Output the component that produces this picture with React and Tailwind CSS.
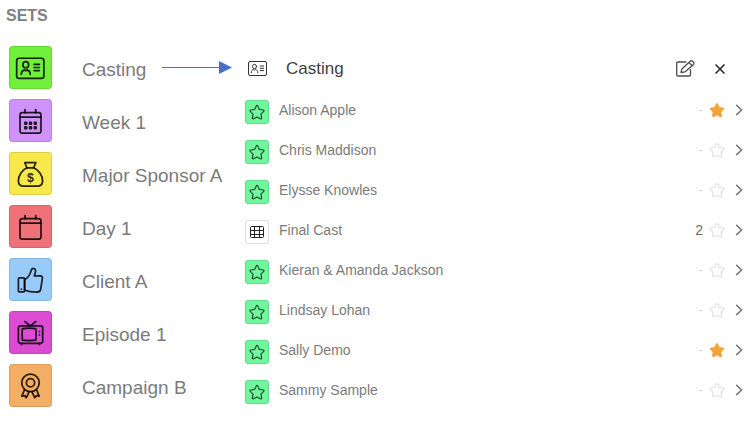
import React from "react";

const STAR =
  "M12 2.2c.5 0 .9.3 1.1.7l2.5 5.3 5.8.8c1 .2 1.4 1.3.7 2l-4.2 4.100 1 5.800c.2 1-.9 1.800-1.800 1.300L12 19.500l-5.100 2.700c-.9.5-2-.3-1.800-1.300l1-5.800L1.900 11c-.7-.7-.3-1.800.7-2l5.800-.8 2.500-5.300c.2-.4.6-.7 1.100-.7z";

function StarIcon({ className, filled, weight }) {
  return (
    <svg
      viewBox="0 0 24 24"
      className={className}
      fill={filled ? "currentColor" : "none"}
      stroke="currentColor"
      strokeWidth={weight}
      strokeLinejoin="round"
      aria-hidden="true"
    >
      <path d={STAR} />
    </svg>
  );
}

function TileSvg({ children }) {
  return (
    <svg
      viewBox="0 0 43 43"
      className="size-full"
      fill="none"
      stroke="currentColor"
      strokeWidth="1.8"
      strokeLinecap="round"
      strokeLinejoin="round"
      aria-hidden="true"
    >
      {children}
    </svg>
  );
}

const cardIcon = (
  <TileSvg>
    <rect x="7" y="11.800" width="28.500" height="21" rx="2.500" />
    <ellipse cx="16.500" cy="18.700" rx="3" ry="3.300" />
    <path d="M11.800 28.700c0-3 1.500-4.200 3.300-4.700l1.400.8 1.400-.8c1.800.5 3.300 1.700 3.300 4.700" />
    <path d="M25.300 18.300h5.500M25.300 21.500h5.500M25.300 24.700h5.500" />
  </TileSvg>
);

const calendarBody = (
  <>
    <rect x="10.500" y="13.300" width="22" height="21.500" rx="2.500" />
    <path d="M10.500 18h22M15.800 10v3.300M27 10v3.300" />
  </>
);

const weekIcon = (
  <TileSvg>
    {calendarBody}
    <g fill="currentColor" stroke="none">
      <rect x="14.700" y="22.500" width="3.600" height="3.600" rx="1" />
      <rect x="19.700" y="22.500" width="3.600" height="3.600" rx="1" />
      <rect x="24.700" y="22.500" width="3.600" height="3.600" rx="1" />
      <rect x="14.700" y="27.300" width="3.600" height="3.600" rx="1" />
      <rect x="19.700" y="27.300" width="3.600" height="3.600" rx="1" />
      <rect x="24.700" y="27.300" width="3.600" height="3.600" rx="1" />
    </g>
  </TileSvg>
);

const dayIcon = <TileSvg>{calendarBody}</TileSvg>;

const moneyIcon = (
  <TileSvg>
    <path d="M15.500 10.200h11.600l-2.300 5.300h-7z" />
    <path d="M17.800 15.500C13 17.500 8.800 23.500 8.800 29c0 4 2 5.700 5.700 5.700h13.800c3.700 0 5.900-1.700 5.900-5.700 0-5.500-4.400-11.500-9.400-13.500" />
    <text
      x="21.400"
      y="30"
      textAnchor="middle"
      fill="currentColor"
      stroke="none"
      className="font-['Liberation_Sans',Arial,sans-serif] text-[13px] font-bold"
    >
      $
    </text>
  </TileSvg>
);

const thumbIcon = (
  <TileSvg>
    <rect x="8.800" y="19.800" width="6.500" height="14.700" rx="1" />
    <path d="M12 31.500v.2" />
    <path d="M15.300 21.500c3.500-1.200 4.700-3.500 6.200-7.300.8-2 .7-4.400 2.900-4.400 2 0 2.600 1.800 2.300 3.700-.2 1.500-1 3-1.200 4.300h6.500c1.300 0 2.200.9 2 2.300l-1.800 11.600c-.4 2.200-1.900 3-4 3-4.600 0-8.800-.4-12.900-1.900z" />
  </TileSvg>
);

const tvIcon = (
  <TileSvg>
    <rect x="8.800" y="14.500" width="25.500" height="18.300" rx="2" />
    <path d="M13 17.500c4.200-.6 9.800-.6 14 0 .5 4 .5 8 0 12-4.200.6-9.800.6-14 0-.5-4-.5-8 0-12z" />
    <path d="M15.500 10l5.800 4.500 5.800-4.500M12 33v1.200M31 33v1.200" />
    <path d="M30.900 20.500v.2M30.900 24v.2" />
  </TileSvg>
);

const awardIcon = (
  <TileSvg>
    <circle cx="21.500" cy="18.700" r="9.200" />
    <circle cx="21.500" cy="18.700" r="4.300" />
    <path d="M15.200 26l-2.800 6.700 3-.6 1.700 2.200 3-6.300M27.800 26l2.800 6.700-3-.6-1.700 2.200-3-6.300" />
  </TileSvg>
);

const SETS = [
  { name: "Casting", tile: "bg-[#70f03a]", icon: cardIcon, current: true },
  { name: "Week 1", tile: "bg-[#cf91fa]", icon: weekIcon },
  { name: "Major Sponsor A", tile: "bg-[#f7e84b]", icon: moneyIcon },
  { name: "Day 1", tile: "bg-[#ef7179]", icon: dayIcon },
  { name: "Client A", tile: "bg-[#98cbfa]", icon: thumbIcon },
  { name: "Episode 1", tile: "bg-[#da4cd2]", icon: tvIcon },
  { name: "Campaign B", tile: "bg-[#f4ad64]", icon: awardIcon },
];

const MEMBERS = [
  { name: "Alison Apple", starred: true },
  { name: "Chris Maddison" },
  { name: "Elysse Knowles" },
  { name: "Final Cast", count: 2, grid: true },
  { name: "Kieran & Amanda Jackson" },
  { name: "Lindsay Lohan" },
  { name: "Sally Demo", starred: true },
  { name: "Sammy Sample" },
];

function Arrow() {
  return (
    <svg viewBox="0 0 70 15" className="ml-4 h-[15px] w-[70px] shrink-0 text-[#4472c4]" aria-hidden="true">
      <path d="M0 7.500h58" stroke="currentColor" />
      <path d="M57 1L70 7.500L57 14z" fill="currentColor" />
    </svg>
  );
}

function SetList() {
  return (
    <nav aria-labelledby="sets" className="w-[245px] shrink-0 pl-[9px]">
      <ul className="flex flex-col gap-2.5">
        {SETS.map((s) => (
          <li key={s.name} className="flex items-center">
            <button type="button" className="flex items-center text-left">
              <span
                className={`size-[43px] shrink-0 rounded border border-black/10 text-black/85 ${s.tile}`}
              >
                {s.icon}
              </span>
              <span className="ml-[30px] pt-1 text-[19px] leading-6 whitespace-nowrap text-[#7b7b7b]">
                {s.name}
              </span>
            </button>
            {s.current && <Arrow />}
          </li>
        ))}
      </ul>
    </nav>
  );
}

function GridIcon() {
  return (
    <svg viewBox="0 0 14 12" className="h-3 w-3.5 text-[#222]" fill="none" stroke="currentColor" aria-hidden="true">
      <rect x="0.500" y="0.500" width="13" height="11" rx="1" />
      <path d="M0.500 4.500h13M0.500 8.500h13M4.500 0.500v11M9.500 0.500v11" />
    </svg>
  );
}

function Member({ member }) {
  return (
    <li className="flex items-start">
      <span
        className={`flex size-6 shrink-0 items-center justify-center rounded-[3px] border ${
          member.grid ? "border-[#dedede] bg-white" : "border-[#62dc8b] bg-[#70f79e]"
        }`}
      >
        {member.grid ? <GridIcon /> : <StarIcon className="size-4 text-[#1c4a2d]" weight={1.8} />}
      </span>
      <a href="#member" className="ml-2.5 flex-1 text-sm leading-5 text-[#7b7b7b]">
        {member.name}
      </a>
      <div className="flex h-5 items-center">
        <span className={`text-sm leading-5 ${member.count ? "text-[#6b6b6b]" : "text-[#d6d6d6]"}`}>
          {member.count ?? "-"}
        </span>
        <button type="button" aria-label={`Star ${member.name}`} className="ml-1.5">
          {member.starred ? (
            <StarIcon className="size-4 text-[#f5a13c]" weight={1} filled />
          ) : (
            <StarIcon className="size-4 text-[#e0e0e0]" weight={1.7} />
          )}
        </button>
        <button type="button" aria-label={`Open ${member.name}`} className="ml-2.5">
          <svg
            viewBox="0 0 8 12"
            className="h-3 w-2 text-[#808080]"
            fill="none"
            stroke="currentColor"
            strokeWidth="1.7"
            aria-hidden="true"
          >
            <path d="M1.200 0.800L6.500 6L1.200 11.200" />
          </svg>
        </button>
      </div>
    </li>
  );
}

function DetailPanel() {
  return (
    <section aria-labelledby="casting" className="min-w-0 flex-1 pr-1.5">
      <header className="flex h-[46px] items-center">
        <svg
          viewBox="0 0 20 16"
          className="ml-0.5 h-4 w-5 shrink-0 text-[#333]"
          fill="none"
          stroke="currentColor"
          strokeLinecap="round"
          strokeLinejoin="round"
          aria-hidden="true"
        >
          <rect x="1.500" y="0.500" width="18" height="14" rx="1.500" />
          <ellipse cx="7.500" cy="5.500" rx="2" ry="2.200" />
          <path d="M4.200 11.700c0-2 1-2.800 2.400-3.100l.9.500.9-.5c1.400.3 2.400 1.100 2.400 3.100M13.200 5h3.500M13.200 7.300h3.500M13.200 9.600h3.500" />
        </svg>
        <h2 id="casting" className="ml-[19px] flex-1 text-[17px] leading-6 text-[#3f3f3f]">
          Casting
        </h2>
        <button type="button" aria-label="Edit">
          <svg
            viewBox="0 0 20 18"
            className="h-[18px] w-5 text-[#4d4d4d]"
            fill="none"
            stroke="currentColor"
            strokeWidth="1.3"
            strokeLinecap="round"
            strokeLinejoin="round"
            aria-hidden="true"
          >
            <path d="M11 2H3Q1.700 2 1.700 3.300v11.400Q1.700 16 3 16h11.200q1.300 0 1.300-1.300V9.500" />
            <path d="M6 12.500l.9-3.600L15.200 1.200a1.600 1.600 0 0 1 2.300 0l1 1a1.600 1.600 0 0 1 0 2.300L9.900 11.900zM14 2.600l3.200 3.200" />
          </svg>
        </button>
        <button type="button" aria-label="Close" className="mr-[18px] ml-5">
          <svg
            viewBox="0 0 10 10"
            className="size-2.5 text-[#222]"
            fill="none"
            stroke="currentColor"
            strokeWidth="1.5"
            aria-hidden="true"
          >
            <path d="M0.500 0.500L9.500 9.500M9.500 0.500L0.500 9.500" />
          </svg>
        </button>
      </header>
      <ul className="mt-2 flex flex-col gap-4">
        {MEMBERS.map((m) => (
          <Member key={m.name} member={m} />
        ))}
      </ul>
    </section>
  );
}

export default function App() {
  return (
    <main className="min-h-screen bg-white font-['Liberation_Sans',Arial,sans-serif]">
      <h1 id="sets" className="pt-1 pl-1.5 text-base leading-6 font-bold text-[#808080]">
        SETS
      </h1>
      <div className="flex items-start pt-[18px]">
        <SetList />
        <DetailPanel />
      </div>
    </main>
  );
}
